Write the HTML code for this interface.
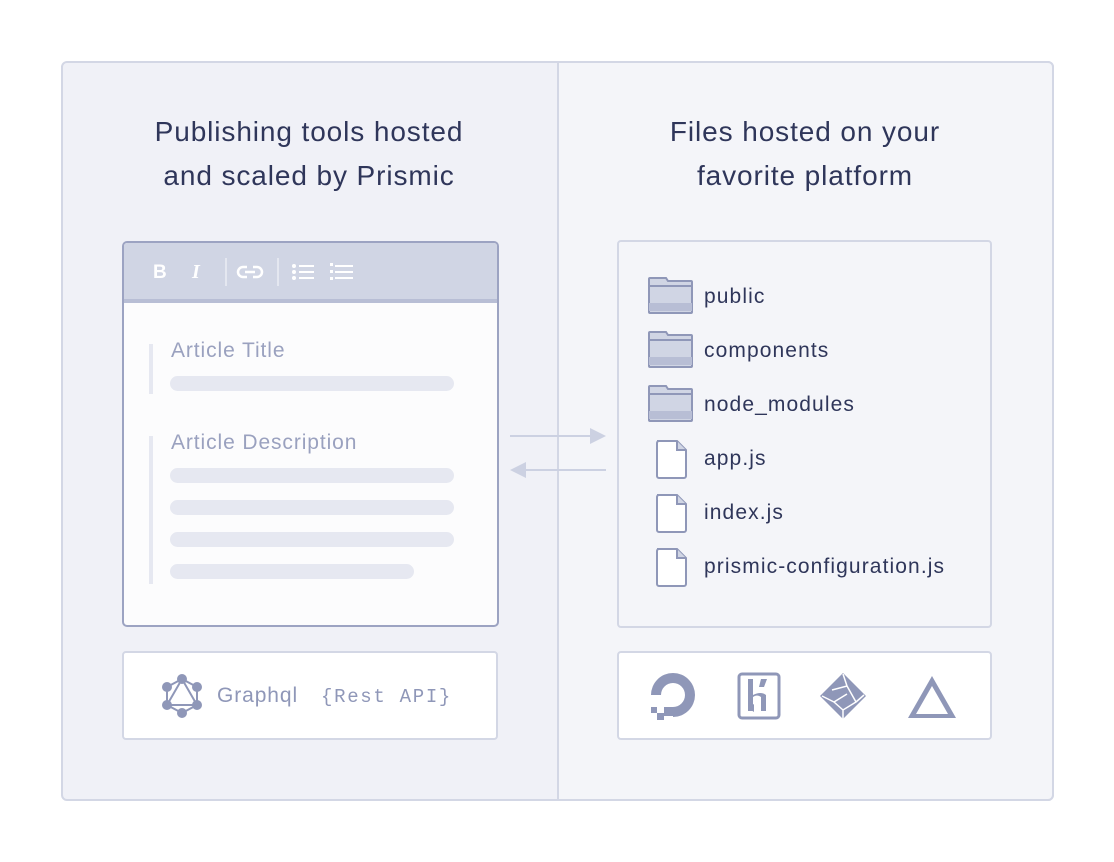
<!DOCTYPE html>
<html><head><meta charset="utf-8"><style>
*{box-sizing:border-box;margin:0;padding:0}
body{width:1114px;height:862px;background:#fff;position:relative;font-family:"Liberation Sans",sans-serif;overflow:hidden}
.abs{position:absolute}
.outer{left:61px;top:61px;width:993px;height:740px;border:2px solid #d3d7e5;border-radius:6px;overflow:hidden;background:#f0f1f7}
.right{left:557px;top:61px;width:497px;height:740px;background:#f4f5f9;border:2px solid #d3d7e5;border-radius:0 6px 6px 0}
h2{position:absolute;font-weight:normal;font-size:28px;letter-spacing:0.9px;color:#2f365a;text-align:center;line-height:44px;width:496px;white-space:nowrap}
.box{background:#fff;border:2px solid #d3d7e5;border-radius:4px}
.bar{background:#e6e8f1;height:15px;border-radius:8px;position:absolute;left:170px}
.fname{position:absolute;left:704px;font-size:21px;letter-spacing:1.1px;color:#2f365a}
</style></head><body>
<div class="abs outer"></div>
<div class="abs right"></div>
<h2 style="left:61px;top:110px">Publishing tools hosted<br>and scaled by Prismic</h2>
<h2 style="left:557px;top:110px">Files hosted on your<br>favorite platform</h2>

<div class="abs" style="left:122px;top:241px;width:377px;height:386px;border:2px solid #9ca3c2;border-radius:5px;background:#fcfcfd;overflow:hidden">
 <div style="height:60px;background:#d0d5e4;border-bottom:4px solid #b8bed5"></div>
</div>
<svg class="abs" style="left:140px;top:255px" width="240" height="34" viewBox="0 0 240 34">
 <text x="13" y="23" font-family="Liberation Sans" font-weight="bold" font-size="19" fill="#fff">B</text>
 <text x="52" y="23" font-family="Liberation Serif" font-weight="bold" font-style="italic" font-size="20" fill="#fff">I</text>
 <rect x="85" y="3" width="2" height="28" fill="#e4e7f0"/>
 <rect x="137" y="3" width="2" height="28" fill="#e4e7f0"/>
 <g fill="none" stroke="#fff" stroke-width="2.5"><path d="M107,12 h-4 a5,5 0 0 0 0,10 h4 M113,12 h4 a5,5 0 0 1 0,10 h-4 M105,17 h10"/></g>
 <g fill="#fff"><circle cx="154" cy="11" r="2"/><circle cx="154" cy="17" r="2"/><circle cx="154" cy="23" r="2"/>
 <rect x="159" y="10" width="15" height="2"/><rect x="159" y="16" width="15" height="2"/><rect x="159" y="22" width="15" height="2"/>
 <rect x="195" y="10" width="18" height="2"/><rect x="195" y="16" width="18" height="2"/><rect x="195" y="22" width="18" height="2"/>
 <rect x="190" y="8" width="3" height="3"/><rect x="190" y="15" width="3" height="3"/><rect x="190" y="22" width="3" height="3"/></g>
</svg>
<div class="abs" style="left:149px;top:344px;width:4px;height:50px;background:#e6e8f1"></div>
<div class="abs" style="left:171px;top:339px;font-size:21px;letter-spacing:0.9px;color:#9aa1bf">Article Title</div>
<div class="bar" style="top:376px;width:284px"></div>
<div class="abs" style="left:149px;top:436px;width:4px;height:148px;background:#e6e8f1"></div>
<div class="abs" style="left:171px;top:431px;font-size:21px;letter-spacing:0.9px;color:#9aa1bf">Article Description</div>
<div class="bar" style="top:468px;width:284px"></div>
<div class="bar" style="top:500px;width:284px"></div>
<div class="bar" style="top:532px;width:284px"></div>
<div class="bar" style="top:564px;width:244px"></div>

<svg class="abs" style="left:505px;top:425px" width="105" height="55">
 <line x1="5" y1="11" x2="90" y2="11" stroke="#ccd1e2" stroke-width="2"/>
 <polygon points="85,3 101,11 85,19" fill="#ccd1e2"/>
 <line x1="20" y1="45" x2="101" y2="45" stroke="#ccd1e2" stroke-width="2"/>
 <polygon points="21,37 5,45 21,53" fill="#ccd1e2"/>
</svg>

<div class="abs box" style="left:617px;top:240px;width:375px;height:388px;background:#f4f5f9"></div>
<svg class="abs" style="left:640px;top:270px" width="60" height="320" fill="none" stroke="#8f97b8" stroke-width="2">
 <g id="f"><path d="M9,10 v-1 a1,1 0 0 1 1,-1 h16 l2,3 h23 a1,1 0 0 1 1,1 v30 a1,1 0 0 1 -1,1 h-41 a1,1 0 0 1 -1,-1 z" fill="#d0d5e4"/><rect x="9" y="33" width="43" height="8" fill="#b8bed5" stroke="none"/><path d="M9,16 h43"/></g>
 <use href="#f" y="54"/><use href="#f" y="108"/>
 <g id="d"><path d="M17,171 h20 l9,9 v26 a2,2 0 0 1 -2,2 h-25 a2,2 0 0 1 -2,-2 v-33 a2,2 0 0 1 2,-2 z" fill="#fff"/><path d="M37,171 v9 h9" fill="#d0d5e4"/></g>
 <use href="#d" y="54"/><use href="#d" y="108"/>
</svg>
<div class="fname" style="top:285px">public</div>
<div class="fname" style="top:339px">components</div>
<div class="fname" style="top:393px">node_modules</div>
<div class="fname" style="top:447px">app.js</div>
<div class="fname" style="top:501px">index.js</div>
<div class="fname" style="top:555px">prismic-configuration.js</div>

<div class="abs box" style="left:122px;top:651px;width:376px;height:89px"></div>
<svg class="abs" style="left:160px;top:674px" width="44" height="44" fill="#8f97b8" stroke="#8f97b8" stroke-width="2">
 <g fill="none"><polygon points="22,5 37,13 37,31 22,39 7,31 7,13"/><polygon points="22,5 37,31 7,31"/></g>
 <circle cx="22" cy="5" r="4"/><circle cx="37" cy="13" r="4"/><circle cx="37" cy="31" r="4"/><circle cx="22" cy="39" r="4"/><circle cx="7" cy="31" r="4"/><circle cx="7" cy="13" r="4"/>
</svg>
<div class="abs" style="left:217px;top:684px;font-size:21px;letter-spacing:0.9px;color:#8f97b8">Graphql</div>
<div class="abs" style="left:321px;top:686px;font-size:19px;letter-spacing:1.7px;color:#8f97b8;font-family:'Liberation Mono',monospace">{Rest API}</div>

<div class="abs box" style="left:617px;top:651px;width:375px;height:89px"></div>
<svg class="abs" style="left:640px;top:668px" width="330" height="56" fill="#8f97b8">
 <path d="M11,27 A22,22 0 1 1 33,49 L33,39 A12,12 0 1 0 21,27 Z"/>
 <rect x="24" y="39" width="9" height="9"/><rect x="17" y="45" width="7" height="7"/><rect x="11" y="39" width="6" height="6"/>
 <rect x="99" y="6" width="40" height="44" rx="3" fill="none" stroke="#8f97b8" stroke-width="3"/>
 <path d="M108,11 h5 v16 q8,-4 13,0 v16 h-5 v-14 q-4,-3 -8,0 v14 h-5z M121,11 h6 l-3,8 h-5z M108,40 l6,-4 v8z"/>
 <path d="M203,5 L226,28 L203,51 L180,28z"/>
 <g stroke="#fff" stroke-width="1.5" fill="none"><path d="M192,22 l15,-4 l9,16 l-13,8 l-9,-8 l13,-8 M207,18 l-4,-12 M216,34 l8,-7 M203,42 l0,9 M194,34 l-12,-6"/></g>
 <path d="M292,8 l24,42 h-48z M292,18 l-16,28 h32z" fill-rule="evenodd"/>
</svg>
</body></html>
